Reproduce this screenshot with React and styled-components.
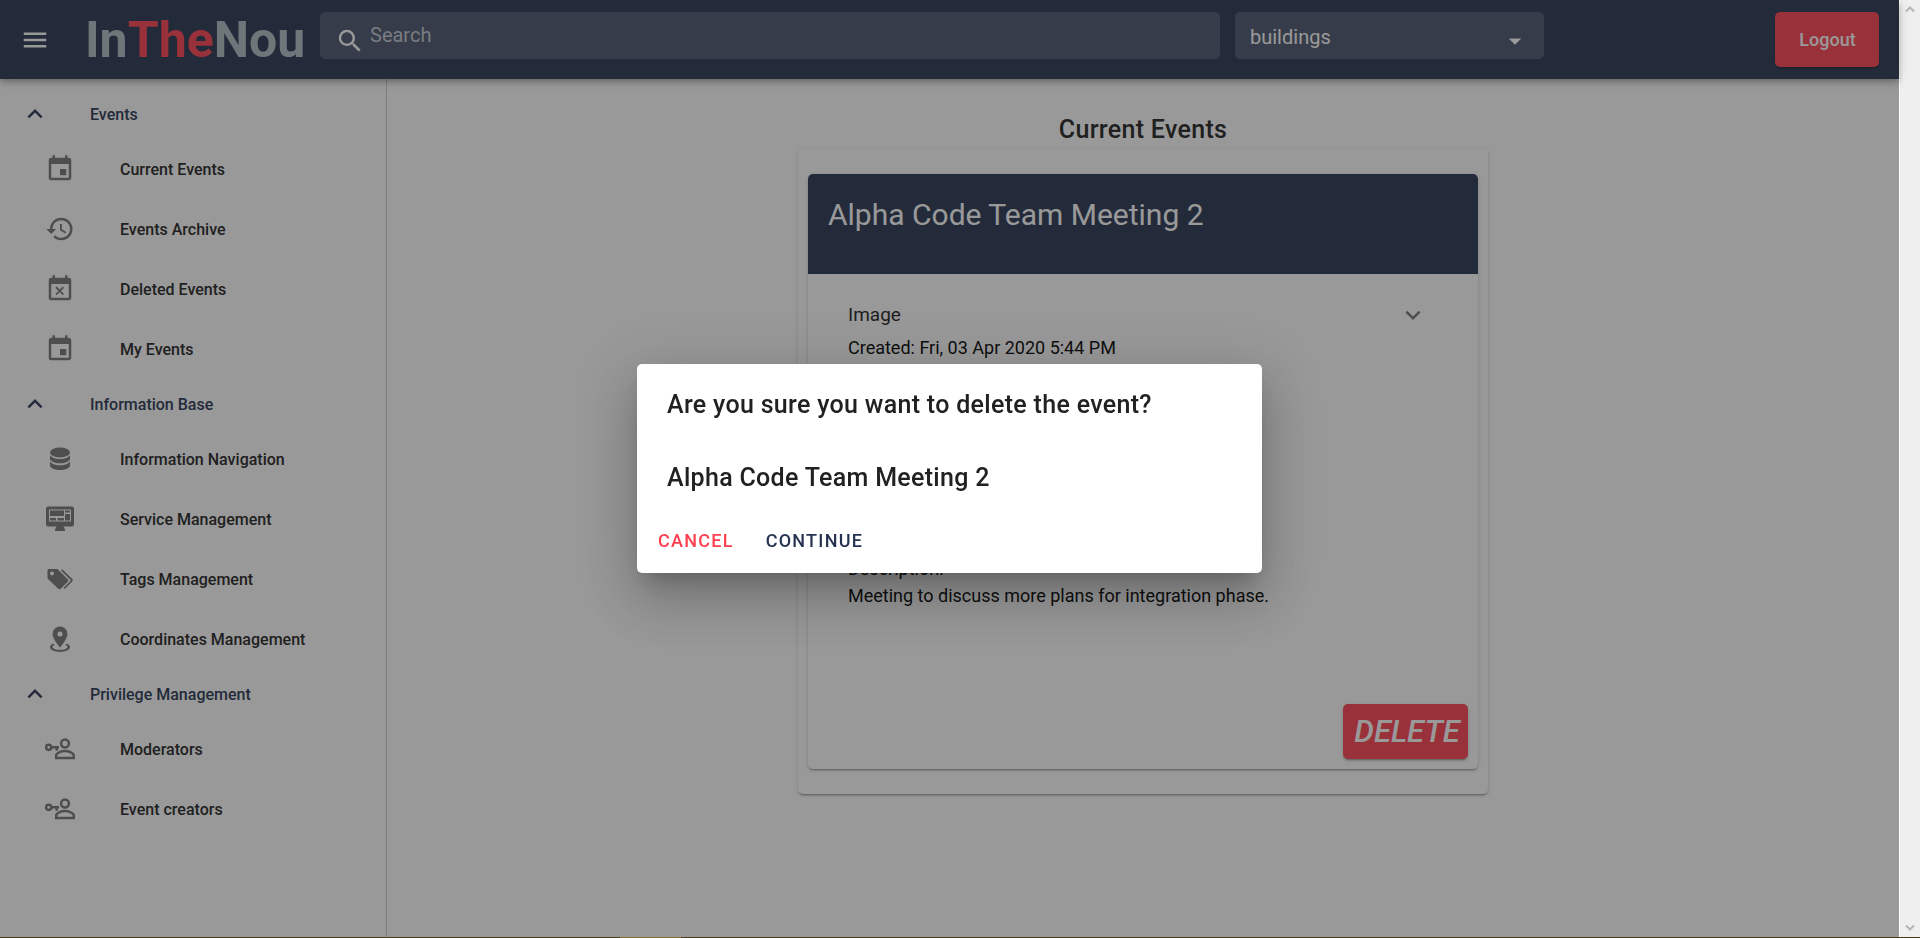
import React from 'react';
import styled, { createGlobalStyle } from 'styled-components';
import { MdEvent, MdHistory, MdEventBusy, MdMenu, MdSearch, MdArrowDropDown, MdKeyboardArrowUp, MdKeyboardArrowDown } from 'react-icons/md';

const NAVY = '#263350';
const RED = '#ff4050';

const GlobalStyle = createGlobalStyle`
  *, *::before, *::after { box-sizing: border-box; }
  body { margin: 0; font-family: Roboto, "Liberation Sans", sans-serif; font-size: 18px; line-height: 27px; color: #000; background: #fff; }
  h1, h2, h3, p, ul { margin: 0; padding: 0; font-weight: 400; }
  ul { list-style: none; }
  button, input, select { font: inherit; border: 0; margin: 0; padding: 0; }
  button { cursor: pointer; }
`;

const Window = styled.div`
  display: flex;
  height: 100vh;
  padding-bottom: 1px;
  background: linear-gradient(90deg, #4a3a14 620px, #8a6b2c 620px 681px, #4a3a14 681px);
  overflow: hidden;
`;

const Page = styled.div`
  flex: 1;
  min-width: 0;
  display: flex;
  flex-direction: column;
  background: #fff;
`;

const AppBar = styled.header`
  flex: none;
  position: relative;
  display: flex;
  align-items: flex-start;
  height: 79px;
  padding: 12px 20px;
  background: ${NAVY};
  color: #fff;
  box-shadow: 0 2px 5px -1px rgba(0, 0, 0, 0.2), 0 5px 6px rgba(0, 0, 0, 0.14), 0 1px 12px rgba(0, 0, 0, 0.12);
`;

const MenuButton = styled.button`
  display: flex;
  align-items: center;
  height: 55px;
  background: none;
  color: #fff;
  font-size: 30px;
`;

const Logo = styled.h1`
  margin-left: 35px;
  width: 235px;
  font-size: 50px;
  line-height: 57px;
  font-weight: 700;
  color: #b0bec5;
  white-space: nowrap;
`;

const LogoAccent = styled.span`
  color: ${RED};
`;

const Field = styled.label`
  display: flex;
  align-items: center;
  height: 47px;
  padding: 0 15px;
  border-radius: 5px;
  background: rgba(255, 255, 255, 0.16);
  color: #fff;
  font-size: 20px;
  svg { flex: none; margin-top: 10px; font-size: 30px; }
`;

const SearchField = styled(Field)`
  flex: 1;
  margin-right: 15px;
`;

const SearchInput = styled.input`
  flex: 1;
  min-width: 0;
  height: 46px;
  align-self: flex-start;
  padding-left: 5px;
  background: none;
  color: #fff;
  outline: 0;
  &::placeholder { color: rgba(255, 255, 255, 0.7); opacity: 1; }
`;

const SelectField = styled(Field)`
  width: 309px;
  padding-right: 14px;
  margin-right: 231px;
`;

const Select = styled.select`
  flex: 1;
  padding-top: 4px;
  appearance: none;
  background: none;
  color: #fff;
  outline: 0;
`;

const SolidButton = styled.button`
  height: 55px;
  width: ${(p) => (p.$large ? 125 : 104)}px;
  padding-left: ${(p) => (p.$large ? 3 : 1)}px;
  border-radius: 5px;
  background: ${RED};
  color: #fff;
  font-size: ${(p) => (p.$large ? 31 : 18)}px;
  font-style: ${(p) => (p.$large ? 'italic' : 'normal')};
  font-weight: 500;
  box-shadow: 0 3px 1px -2px rgba(0, 0, 0, 0.2), 0 2px 2px rgba(0, 0, 0, 0.14), 0 1px 5px rgba(0, 0, 0, 0.12);
`;

const Body = styled.div`
  flex: 1;
  min-height: 0;
  display: flex;
`;

const Sidebar = styled.nav`
  flex: none;
  width: 387px;
  padding-top: 10px;
  border-right: 1px solid #cfcfcf;
`;

const GroupToggle = styled.button`
  display: flex;
  align-items: center;
  gap: 40px;
  width: 100%;
  height: 50px;
  padding: 0 20px;
  background: none;
  color: ${NAVY};
  font-size: 16px;
  font-weight: 500;
  svg { font-size: 30px; }
`;

const NavLink = styled.a`
  display: flex;
  align-items: center;
  gap: 45px;
  height: 60px;
  padding: 0 45px;
  color: #212121;
  font-size: 16px;
  font-weight: 500;
  text-decoration: none;
  svg { flex: none; width: 30px; height: 30px; color: #757575; }
`;

const Main = styled.main`
  flex: 1;
  display: flex;
  flex-direction: column;
  align-items: center;
  padding-top: 31px;
`;

const Heading = styled.h2`
  font-size: 25px;
  line-height: 39px;
  font-weight: 500;
  letter-spacing: 0.0125em;
  color: #212121;
`;

const Sheet = styled.section`
  border-radius: 5px;
  background: #fff;
  box-shadow: 0 3px 1px -2px rgba(0, 0, 0, 0.2), 0 2px 2px rgba(0, 0, 0, 0.14), 0 1px 5px rgba(0, 0, 0, 0.12);
`;

const ListSheet = styled(Sheet)`
  width: 690px;
  padding: 25px 10px;
`;

const EventCard = styled(Sheet)`
  display: flex;
  flex-direction: column;
  height: 595px;
`;

const EventTitle = styled.h3`
  height: 100px;
  padding: 21px 20px;
  border-radius: 5px 5px 0 0;
  background: ${NAVY};
  color: #fff;
  font-size: 30px;
  line-height: 40px;
`;

const ImageToggle = styled.button`
  display: flex;
  align-items: center;
  justify-content: space-between;
  height: 60px;
  margin: 0 20px;
  padding: 21px 30px 0 20px;
  background: none;
  color: #212121;
  font-size: 19px;
  svg { font-size: 30px; color: #757575; }
`;

const Details = styled.div`
  flex: 1;
  padding: 0 40px;
`;

const DetailBlock = styled.div`
  margin-top: 194px;
`;

const CardActions = styled.div`
  display: flex;
  justify-content: flex-end;
  padding: 10px;
`;

const Scrollbar = styled.div`
  flex: none;
  display: flex;
  flex-direction: column;
  justify-content: space-between;
  align-items: center;
  width: 21px;
  padding: 4px 0;
  border-left: 1px solid #fff;
  background: #efefef;
  color: #b5b5b5;
`;

const Overlay = styled.div`
  position: fixed;
  inset: 0 21px 1px 0;
  display: flex;
  align-items: center;
  justify-content: center;
  background: rgba(33, 33, 33, 0.46);
`;

const Dialog = styled.div`
  width: 625px;
  padding: 21px 30px 10px;
  border-radius: 5px;
  background: #fff;
  color: #212121;
  box-shadow: 0 14px 19px -9px rgba(0, 0, 0, 0.2), 0 30px 48px 4px rgba(0, 0, 0, 0.14), 0 11px 58px 10px rgba(0, 0, 0, 0.12);
`;

const DialogLine = styled.h2`
  font-size: 25px;
  line-height: 40px;
  font-weight: 500;
  letter-spacing: 0.0125em;
  & + & { margin-top: 33px; }
`;

const DialogActions = styled.div`
  display: flex;
  gap: 10px;
  margin: 20px -20px 0;
`;

const TextButton = styled.button`
  height: 45px;
  padding: 0 11px;
  background: none;
  color: ${(p) => p.$color};
  font-size: 18px;
  font-weight: 500;
  letter-spacing: 0.07em;
`;

const Svg = ({ children, box = '0 0 24 24' }) => (
  <svg viewBox={box} fill="currentColor" aria-hidden="true">{children}</svg>
);

const DatabaseIcon = () => (
  <Svg box="0 0 30 30">
    <ellipse cx="15" cy="8.500" rx="10" ry="4.900" />
    <path d="M5 11.200c1.500 2.400 5.500 3.700 10 3.700s8.500-1.300 10-3.700v3.500c0 2.500-4.500 4.500-10 4.500s-10-2-10-4.500z" />
    <path d="M5 17.500c1.500 2.400 5.500 3.700 10 3.700s8.500-1.300 10-3.700v4c0 2.500-4.500 4.500-10 4.500s-10-2-10-4.500z" />
  </Svg>
);

const DashboardIcon = () => (
  <Svg box="0 0 30 30">
    <path fillRule="evenodd" d="M3 2.500h24a2 2 0 0 1 2 2v16a2 2 0 0 1-2 2h-8.500l1.500 3v1.500H10v-1.500l1.500-3H3a2 2 0 0 1-2-2v-16a2 2 0 0 1 2-2zM4 5.500v12h22v-12zM5 6.500h14v5.500H5zM20 6.500h5v2h-5zM20 10h5v6.500h-5zM5 14h6v2.500H5zM12.500 14H19v2.500h-6.500z" />
  </Svg>
);

const TagsIcon = () => (
  <Svg box="0 0 30 30">
    <path fillRule="evenodd" d="M4 5h8.500l10 10c1 1 1 2 0 3L16 24.500c-1 1-2 1-3 0l-10.500-10V6.500C2.500 5.600 3.100 5 4 5zm3 2.500a2 2 0 1 0 0 4 2 2 0 0 0 0-4z" />
    <path d="M16 6.500l1.200-1.200 9.800 9.400c1 1 1 2 0 3L19.800 25l-1.200-1.200 7-7c.3-.3.300-.6 0-.9z" />
  </Svg>
);

const PinIcon = () => (
  <Svg box="0 0 30 30">
    <path fillRule="evenodd" d="M15 2.500a7.500 7.500 0 0 1 7.500 7.500c0 5-7.500 13.500-7.500 13.500S7.500 15 7.500 10A7.500 7.500 0 0 1 15 2.500zm0 5a2.500 2.500 0 1 0 0 5 2.500 2.500 0 0 0 0-5z" />
    <path d="M8.500 19.500l1 1.500c-1.500.6-2 1.200-2 1.900 0 1.500 3.200 2.900 7.500 2.900s7.500-1.400 7.500-2.900c0-.7-.6-1.300-2-1.900l1-1.500c2.200.9 3.500 2.100 3.500 3.600 0 2.800-4.400 4.900-10 4.900s-10-2.100-10-4.900c0-1.500 1.300-2.700 3.500-3.600z" />
  </Svg>
);

const AccountKeyIcon = () => (
  <Svg box="0 0 30 30">
    <g fill="none" stroke="currentColor" strokeWidth="2.500">
      <circle cx="20" cy="9.500" r="3.900" />
      <path d="M11.200 23.900v-2.400c0-2.600 5-4.400 8.800-4.400s8.800 1.800 8.800 4.400v2.400z" />
      <circle cx="3.700" cy="13.300" r="2.600" />
      <path d="M6.300 13.300H14M11.700 13.500v3.200" />
    </g>
  </Svg>
);

const ScrollArrow = ({ down }) => (
  <svg width="12" height="10" viewBox="0 0 12 10" fill="none" stroke="currentColor" strokeWidth="2" aria-hidden="true">
    <path d={down ? 'M2 2.500l4 4 4-4' : 'M2 7.500l4-4 4 4'} />
  </svg>
);

const groups = [
  { name: 'Events', items: [['Current Events', MdEvent], ['Events Archive', MdHistory], ['Deleted Events', MdEventBusy], ['My Events', MdEvent]] },
  { name: 'Information Base', items: [['Information Navigation', DatabaseIcon], ['Service Management', DashboardIcon], ['Tags Management', TagsIcon], ['Coordinates Management', PinIcon]] },
  { name: 'Privilege Management', items: [['Moderators', AccountKeyIcon], ['Event creators', AccountKeyIcon]] },
];

export default function App() {
  return (
    <>
      <GlobalStyle />
      <Window>
        <Page>
          <AppBar>
            <MenuButton aria-label="Menu"><MdMenu /></MenuButton>
            <Logo>In<LogoAccent>The</LogoAccent>Nou</Logo>
            <SearchField>
              <MdSearch />
              <SearchInput type="text" placeholder="Search" aria-label="Search" />
            </SearchField>
            <SelectField>
              <Select aria-label="Search in" defaultValue="buildings">
                <option>buildings</option>
              </Select>
              <MdArrowDropDown />
            </SelectField>
            <SolidButton>Logout</SolidButton>
          </AppBar>
          <Body>
            <Sidebar>
              {groups.map((group) => (
                <section key={group.name}>
                  <GroupToggle aria-expanded="true"><MdKeyboardArrowUp />{group.name}</GroupToggle>
                  <ul>
                    {group.items.map(([label, Icon]) => (
                      <li key={label}><NavLink href="#"><Icon />{label}</NavLink></li>
                    ))}
                  </ul>
                </section>
              ))}
            </Sidebar>
            <Main>
              <Heading>Current Events</Heading>
              <ListSheet>
                <EventCard>
                  <EventTitle>Alpha Code Team Meeting 2</EventTitle>
                  <ImageToggle aria-expanded="false">Image<MdKeyboardArrowDown /></ImageToggle>
                  <Details>
                    <p>Created: Fri, 03 Apr 2020 5:44 PM</p>
                    <DetailBlock>
                      <p>Description:</p>
                      <p>Meeting to discuss more plans for integration phase.</p>
                    </DetailBlock>
                  </Details>
                  <CardActions><SolidButton $large>DELETE</SolidButton></CardActions>
                </EventCard>
              </ListSheet>
            </Main>
          </Body>
        </Page>
        <Scrollbar aria-hidden="true"><ScrollArrow /><ScrollArrow down /></Scrollbar>
      </Window>
      <Overlay>
        <Dialog role="dialog" aria-modal="true" aria-labelledby="dialog-title">
          <DialogLine id="dialog-title">Are you sure you want to delete the event?</DialogLine>
          <DialogLine>Alpha Code Team Meeting 2</DialogLine>
          <DialogActions>
            <TextButton $color={RED}>CANCEL</TextButton>
            <TextButton $color={NAVY}>CONTINUE</TextButton>
          </DialogActions>
        </Dialog>
      </Overlay>
    </>
  );
}
